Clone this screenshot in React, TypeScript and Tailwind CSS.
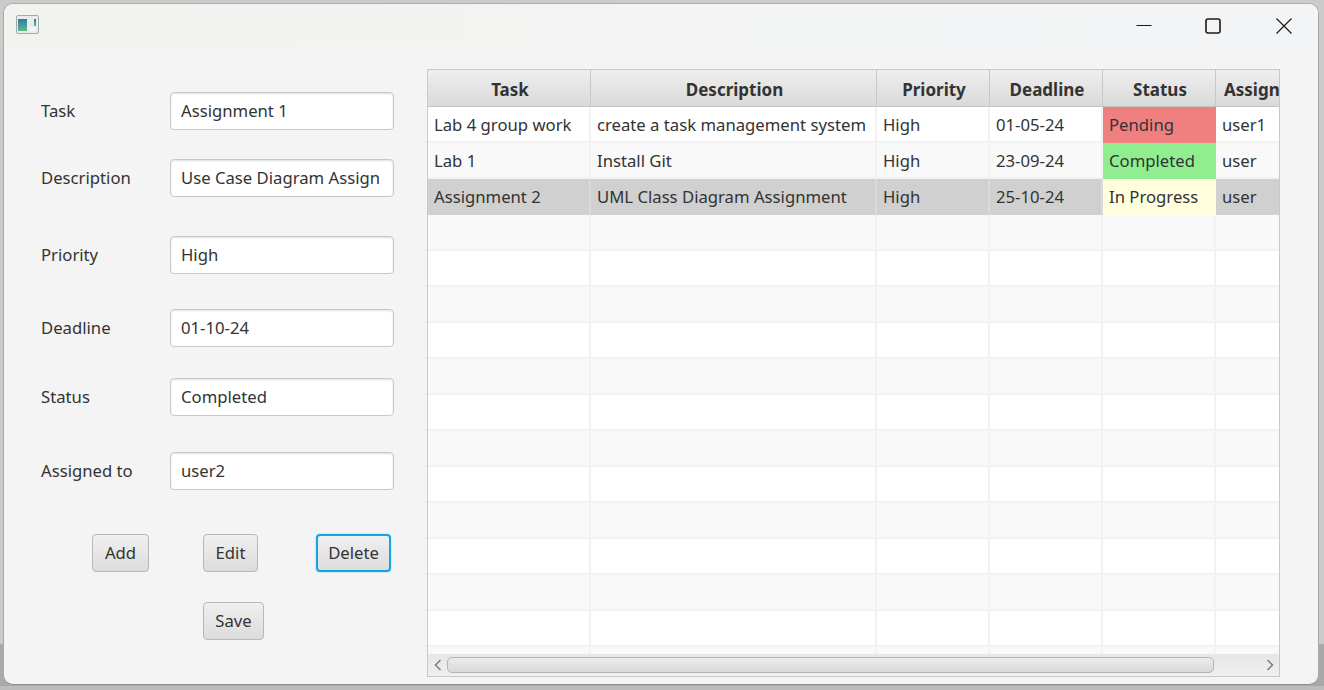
const fields = [
  { label: "Task", value: "Assignment 1", mt: "mt-[45px]" },
  { label: "Description", value: "Use Case Diagram Assignment", mt: "mt-[29px]" },
  { label: "Priority", value: "High", mt: "mt-[39px]" },
  { label: "Deadline", value: "01-10-24", mt: "mt-[35px]" },
  { label: "Status", value: "Completed", mt: "mt-[31px]" },
  { label: "Assigned to", value: "user2", mt: "mt-[36px]" },
];

const columns = [
  { name: "Task", width: "w-[163px]" },
  { name: "Description", width: "w-[286px]" },
  { name: "Priority", width: "w-[113px]" },
  { name: "Deadline", width: "w-[113px]" },
  { name: "Status", width: "w-[113px]" },
  { name: "Assigned to", width: "w-[64px]" },
];

const rows = [
  { cells: ["Lab 4 group work", "create a task management system", "High", "01-05-24", "Pending", "user1"], status: "bg-[#f08080]" },
  { cells: ["Lab 1", "Install Git", "High", "23-09-24", "Completed", "user"], status: "bg-[#90ee90]" },
  { cells: ["Assignment 2", "UML Class Diagram Assignment", "High", "25-10-24", "In Progress", "user"], status: "bg-[#ffffe0]", selected: true },
];

const emptyRows = Array.from({ length: 13 }, (_, i) => i);

const buttonClass =
  "flex h-[38px] items-center justify-center rounded-[4px] bg-gradient-to-b from-[#f0f0f0] to-[#dcdcdc] text-[16.7px] text-[#333]";

function Titlebar() {
  return (
    <div className="flex h-[43px] shrink-0 items-center justify-between bg-gradient-to-r from-[#f2f3ef] to-[#f3f4f6] pl-[12px]">
      <svg className="mb-[2px]" width="23" height="19" viewBox="0 0 23 19">
        <rect x="0.5" y="0.5" width="22" height="18" rx="1.5" fill="#e8ecee" stroke="#a4a9ad" />
        <defs>
          <linearGradient id="appIcon" x1="0" y1="0" x2="0" y2="1">
            <stop offset="0" stopColor="#2f7aa0" />
            <stop offset="1" stopColor="#5fb98a" />
          </linearGradient>
        </defs>
        <rect x="2" y="4" width="9" height="12" fill="url(#appIcon)" />
        <rect x="18" y="4" width="2" height="7" fill="url(#appIcon)" />
        <rect x="13" y="12" width="7" height="4" fill="#f4f4f4" />
      </svg>
      <div className="flex items-center">
        <div className="flex h-[43px] w-[64px] items-center justify-center">
          <svg width="16" height="16" viewBox="0 0 16 16">
            <path d="M0.5 7.5H15.5" stroke="#1a1a1a" strokeWidth="1" />
          </svg>
        </div>
        <div className="flex h-[43px] w-[73px] items-center justify-center">
          <svg width="16" height="16" viewBox="0 0 16 16">
            <rect x="1" y="1" width="14" height="14" rx="2" fill="none" stroke="#1a1a1a" strokeWidth="1.6" />
          </svg>
        </div>
        <div className="flex h-[43px] w-[69px] items-center justify-center">
          <svg width="16" height="16" viewBox="0 0 16 16">
            <path d="M0.5 0.5L15.5 15.5M15.5 0.5L0.5 15.5" stroke="#1a1a1a" strokeWidth="1.2" />
          </svg>
        </div>
      </div>
    </div>
  );
}

function Form() {
  return (
    <div className="w-[423px] shrink-0 pl-[37px]">
      {fields.map((f) => (
        <div key={f.label} className={`flex h-[38px] items-center ${f.mt}`}>
          <span className="w-[129px] shrink-0 text-[16.7px] text-[#333]">{f.label}</span>
          <div className="flex h-full w-[224px] items-center overflow-hidden rounded-[4px] border border-[#c8c8c8] bg-white pl-[10px] pr-[14px] shadow-[inset_0_1px_2px_rgba(0,0,0,0.12)]">
            <span className="overflow-hidden whitespace-nowrap text-[16.7px] text-[#333]">{f.value}</span>
          </div>
        </div>
      ))}
      <div className="mt-[44px] flex pl-[51px]">
        <div className={`${buttonClass} w-[57px] border border-[#b8b8b8]`}>Add</div>
        <div className={`${buttonClass} ml-[54px] w-[55px] border border-[#b8b8b8]`}>Edit</div>
        <div className={`${buttonClass} ml-[58px] w-[75px] border-2 border-[#10a5e3] shadow-[0_0_2px_#8fd6f2]`}>Delete</div>
      </div>
      <div className="mt-[30px] pl-[162px]">
        <div className={`${buttonClass} w-[61px] border border-[#b8b8b8]`}>Save</div>
      </div>
    </div>
  );
}

function Table() {
  return (
    <div className="mt-[22px] flex h-[608px] w-[853px] shrink-0 flex-col overflow-hidden border border-[#c8c8c8] bg-white">
      <div className="flex h-[37px] shrink-0 overflow-hidden border-b border-[#c4c4c4]">
        {columns.map((c) => (
          <div
            key={c.name}
            className={`${c.width} flex shrink-0 items-center justify-center whitespace-nowrap border-r border-[#c8c8c8] bg-gradient-to-b from-[#efefef] to-[#d9d9d9] pl-[2px] pt-[3px] text-[17px] font-bold text-[#333] last:justify-start last:border-r-0 last:pl-[8px]`}
          >
            {c.name}
          </div>
        ))}
      </div>
      <div className="min-h-0 flex-1 overflow-hidden">
        {rows.map((r) => (
          <div key={r.cells[0]} className={`flex h-[36px] ${r.selected ? "bg-[#d0d0d0]" : "odd:bg-white even:bg-[#f9f9f9]"}`}>
            {r.cells.map((cell, i) => (
              <div
                key={i}
                className={`${columns[i].width} flex shrink-0 items-center whitespace-nowrap pl-[6px] text-[16.7px] text-[#333] ${i === 4 ? r.status : "border-b-2 border-r-2 pt-[2px] last:border-r-0"} ${r.selected ? "border-[#d0d0d0] border-r-[#dadada]" : "border-[#f2f2f2]"}`}
              >
                {cell}
              </div>
            ))}
          </div>
        ))}
        {emptyRows.map((n) => (
          <div key={n} className={`flex h-[36px] border-b-2 border-[#f2f2f2] ${n % 2 === 0 ? "bg-[#f9f9f9]" : "bg-white"}`}>
            {columns.map((c) => (
              <div key={c.name} className={`${c.width} shrink-0 border-r-2 border-[#f2f2f2] last:border-r-0`} />
            ))}
          </div>
        ))}
      </div>
      <div className="flex h-[22px] shrink-0 items-center bg-gradient-to-b from-[#e6e6e6] to-[#f0f0f0]">
        <div className="flex w-[19px] shrink-0 justify-center">
          <svg width="8" height="12" viewBox="0 0 8 12">
            <path d="M6.5 1L1.5 6L6.5 11" fill="none" stroke="#7a7a7a" strokeWidth="1.5" />
          </svg>
        </div>
        <div className="h-[16px] w-[767px] shrink-0 rounded-[5px] border border-[#b4b4b4] bg-gradient-to-b from-[#ececec] to-[#d8d8d8]" />
        <div className="flex flex-1 justify-end pr-[5px]">
          <svg width="8" height="12" viewBox="0 0 8 12">
            <path d="M1.5 1L6.5 6L1.5 11" fill="none" stroke="#7a7a7a" strokeWidth="1.5" />
          </svg>
        </div>
      </div>
    </div>
  );
}

export default function App() {
  return (
    <div className="h-[690px] w-[1324px] overflow-hidden bg-[linear-gradient(#cbcbcb_644px,#a9a9a9_644px,#a9a9a9_686px,#bcbcbc_686px)] pl-[3px] pt-[3px] font-['Noto_Sans',sans-serif]">
      <div className="flex h-[682px] w-[1316px] flex-col overflow-hidden rounded-[10px] border border-x-[#a8a8a8] border-t-[#b0b0b0] border-b-[#8f8f8f] bg-[#f4f4f4]">
        <Titlebar />
        <div className="flex min-h-0 flex-1">
          <Form />
          <Table />
        </div>
      </div>
    </div>
  );
}
